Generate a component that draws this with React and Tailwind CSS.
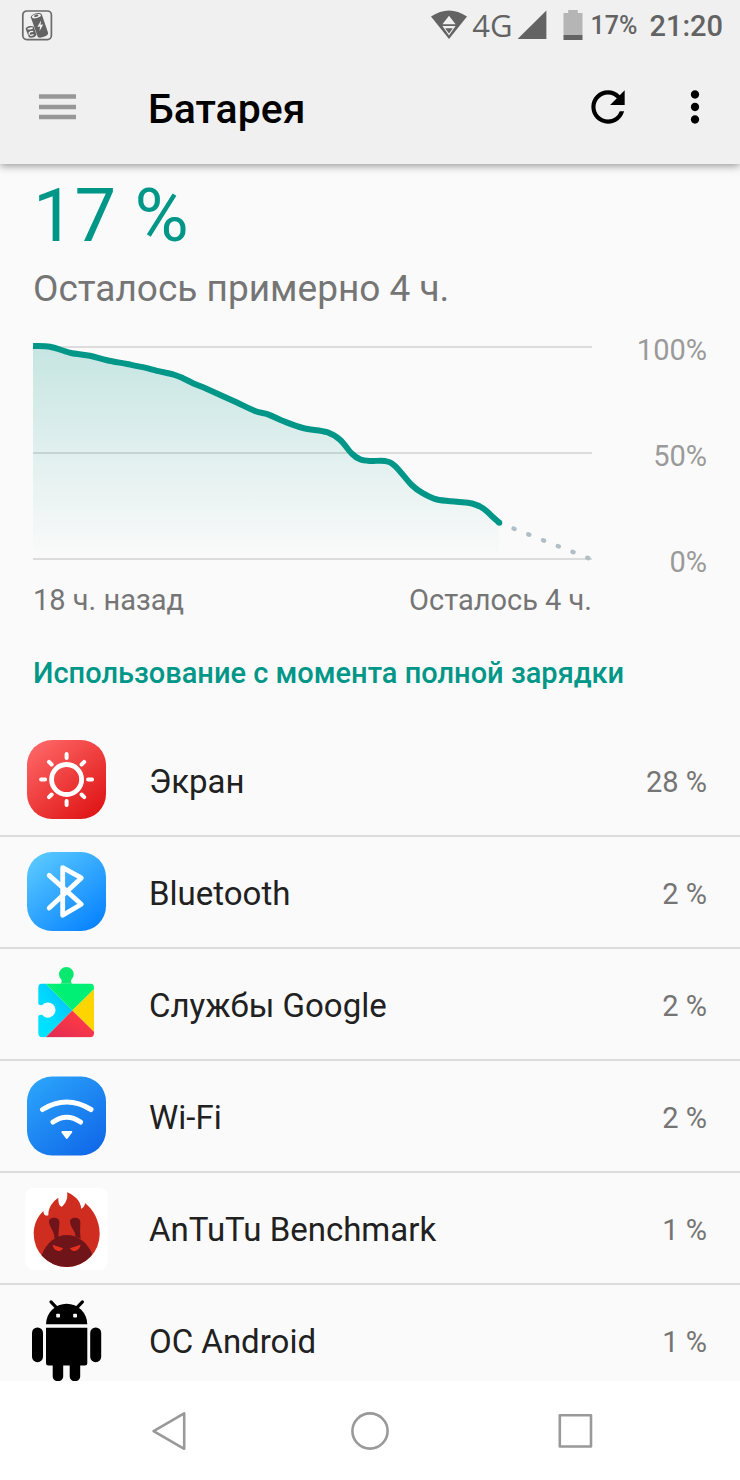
import React from "react";
import { MdMoreVert, MdRefresh } from "react-icons/md";

const LEVELS = [
  [0, 14], [17, 14.7], [37, 20.7], [57, 23.8], [74, 28.2], [94, 32], [112, 35.6],
  [124, 38.8], [140, 42.3], [150, 46.2], [160, 51.2], [174, 57], [200, 68.7],
  [222, 79], [235, 82.3], [250, 89], [270, 96], [294, 100.2], [307, 107.8],
  [318.7, 121.5], [327, 127.3], [337, 129], [352, 129], [362, 134], [378.7, 153],
  [390, 161.3], [404, 167.5], [424, 169.7], [439, 171.5], [450.3, 176.5],
  [458.7, 184], [466.3, 190.7],
];

// Catmull-Rom spline through the points, written as cubic segments.
function smoothPath(points) {
  let d = `M${points[0][0]} ${points[0][1]}`;
  for (let i = 0; i < points.length - 1; i++) {
    const a = points[Math.max(i - 1, 0)];
    const b = points[i];
    const c = points[i + 1];
    const e = points[Math.min(i + 2, points.length - 1)];
    d += `C${b[0] + (c[0] - a[0]) / 6} ${b[1] + (c[1] - a[1]) / 6} ${c[0] - (e[0] - b[0]) / 6} ${c[1] - (e[1] - b[1]) / 6} ${c[0]} ${c[1]}`;
  }
  return d;
}

function BatteryChart() {
  const line = smoothPath(LEVELS);
  return (
    <svg viewBox="0 0 559 244" className="block h-auto w-full" role="img" aria-label="График заряда батареи">
      <defs>
        <linearGradient id="level" x1="0" y1="14" x2="0" y2="226" gradientUnits="userSpaceOnUse">
          <stop offset="0" stopColor="#009688" stopOpacity="0.21" />
          <stop offset="1" stopColor="#009688" stopOpacity="0" />
        </linearGradient>
      </defs>
      <path d="M0 15H559M0 121H559M0 227H559" stroke="#dcdcdc" strokeWidth="2" />
      <path d={`${line}V226H0Z`} fill="url(#level)" />
      <path d="M480.5 196.5L555.5 226.2" stroke="#b0bec5" strokeWidth="4.4" strokeLinecap="round" strokeDasharray="1.2 14.66" />
      <path d={line} fill="none" stroke="#009688" strokeWidth="6" />
      <circle cx="466.3" cy="190.7" r="3" fill="#009688" />
    </svg>
  );
}

function Tile({ id, from, to, y, children }) {
  return (
    <svg viewBox="0 0 84 84" className="size-[84px]" aria-hidden="true">
      <defs>
        <linearGradient id={id} x1="0.1" y1="0" x2="0.9" y2="1">
          <stop offset="0" stopColor={from} />
          <stop offset="1" stopColor={to} />
        </linearGradient>
      </defs>
      <rect x="2" y={y} width="79" height="79" rx="25" fill={`url(#${id})`} />
      {children}
    </svg>
  );
}

function ScreenIcon() {
  return (
    <Tile id="screen" from="#ff6868" to="#de1212" y="2">
      <g fill="none" stroke="#fff">
        <circle cx="41.6" cy="41.5" r="15" strokeWidth="4.8" />
        <path
          strokeWidth="4"
          strokeLinecap="round"
          d="M41.6 20v-4M41.6 63v4M20.1 41.5h-4M63.1 41.5h4M26.6 26.5l-2.6-2.6M56.6 26.5l2.6-2.6M26.6 56.5l-2.6 2.6M56.6 56.5l2.6 2.6"
        />
      </g>
    </Tile>
  );
}

function BluetoothIcon() {
  return (
    <Tile id="bluetooth" from="#5ccbff" to="#0480ff" y="2">
      <path
        d="M24.2 25.4L56.3 54.2L37.7 65.3V17.7L56.3 27.9L24.2 58"
        fill="none"
        stroke="#fff"
        strokeWidth="4.8"
        strokeLinecap="round"
        strokeLinejoin="round"
      />
    </Tile>
  );
}

function WifiIcon() {
  return (
    <Tile id="wifi" from="#2ba5fb" to="#0f66e8" y="2.5">
      <path
        d="M17.5 35.5Q41.7 20.5 66 35.5M28 48Q41.7 38.5 55.5 48"
        fill="none"
        stroke="#fff"
        strokeWidth="5"
        strokeLinecap="round"
      />
      <path d="M37.3 58H46.3L41.8 64Z" fill="#fff" stroke="#fff" strokeWidth="2" strokeLinejoin="round" />
    </Tile>
  );
}

function GoogleServicesIcon() {
  return (
    <svg viewBox="0 0 84 84" className="size-[84px]" aria-hidden="true">
      <defs>
        <linearGradient id="gBlue" x1="1" y1="0" x2="0" y2="1">
          <stop offset="0" stopColor="#00b8ff" />
          <stop offset="0.6" stopColor="#00dcff" />
          <stop offset="1" stopColor="#00e5ff" />
        </linearGradient>
        <linearGradient id="gRed" x1="1" y1="0" x2="0" y2="1">
          <stop offset="0.3" stopColor="#ff3a44" />
          <stop offset="1" stopColor="#de2a55" />
        </linearGradient>
        <clipPath id="gBody">
          <path d="M17.3 21.5H65a4 4 0 0 1 4 4V71.2a4 4 0 0 1-4 4H17.3a4 4 0 0 1-4-4V54Q14.5 52.7 17 52.8A7.6 7.6 0 1 0 17 43.3Q14.5 43.4 13.3 42V25.5a4 4 0 0 1 4-4Z" />
        </clipPath>
      </defs>
      <g clipPath="url(#gBody)">
        <path d="M13 21.5H20.5L47.3 48.5L20.5 75.5H13Z" fill="url(#gBlue)" />
        <path d="M20.5 21.5H75L47.3 48.5Z" fill="#00f076" />
        <path d="M70 26.3V70.7L47.3 48.5Z" fill="#ffd500" />
        <path d="M20.5 75.5L47.3 48.5L75 75.5Z" fill="url(#gRed)" />
      </g>
      <path d="M35.5 21.7Q37.4 20.1 36.4 17.8A7.4 7.4 0 1 1 46.3 17.8Q45.3 20.1 47.2 21.7Z" fill="#0be870" />
    </svg>
  );
}

function AntutuIcon() {
  return (
    <svg viewBox="0 0 84 84" className="size-[84px]" aria-hidden="true">
      <rect x="0.5" y="2" width="82" height="82" rx="8" fill="#fff" />
      <path
        d="M41.7 81A33 33 0 0 1 8.7 48C8.7 38.5 12.5 30.5 18.4 25C18.6 27 19 28.7 20 29.2Q21.5 29.9 23.4 29.3C23 22.5 27 16 33.3 11.7C33.3 15.5 33.6 19.6 36.8 20.7C40.5 18 43.3 12 42 6.3C48.5 8.8 56 14.5 56.2 22.7C58.6 21.5 59.9 19.7 60 17C68.5 23.5 74.7 35 74.7 48A33 33 0 0 1 41.7 81Z"
        fill="#cf2d20"
      />
      <path
        d="M16.5 69.3C21 57 31 49 41.7 49C53 49 63 57 67.4 68.6A33 33 0 0 1 16.5 69.3Z"
        fill="#6f151a"
      />
      <path
        d="M24 36C23.6 30.6 34 30.4 34.4 36C34.6 41 33 46 33.6 52H29.4C29.6 45 24.6 42 24 36ZM45 36C44.8 30.6 55 30.4 55.3 36C55.4 41 54.6 46 55.7 52.5L50.4 51C51 45 45.4 42 45 36Z"
        fill="#6f151a"
      />
      <path
        d="M27.5 58.8L38 62.2Q36.6 65 33.2 65Q28.6 64 27.5 58.8ZM55.7 58.8L45 62.2Q46.4 65 49.8 65Q54.4 64 55.7 58.8Z"
        fill="#e5301f"
      />
    </svg>
  );
}

function AndroidIcon() {
  return (
    <svg viewBox="0 0 84 84" className="size-[84px]" aria-hidden="true">
      <path d="M21 26.3A20.6 20.6 0 0 1 62.3 26.3Z" />
      <path d="M26 3.9L31 9.1M57.4 3.9L52.4 9.1" stroke="#000" strokeWidth="3.2" strokeLinecap="round" />
      <rect x="31.2" y="15.7" width="3.8" height="3.8" rx="0.8" fill="#fafafa" />
      <rect x="48.2" y="15.7" width="3.8" height="3.8" rx="0.8" fill="#fafafa" />
      <path d="M21 29.8H62.3V65a2.5 2.5 0 0 1-2.5 2.5H55.2V78.4a4.8 4.8 0 0 1-4.8 4.8H49.5a4.8 4.8 0 0 1-4.8-4.8V67.5H38.2V78.4a4.8 4.8 0 0 1-4.8 4.8H32.5a4.8 4.8 0 0 1-4.8-4.8V67.5H23.5a2.5 2.5 0 0 1-2.5-2.5Z" />
      <rect x="7" y="29.5" width="11" height="34.7" rx="5.4" />
      <rect x="65.2" y="29.5" width="11" height="34.7" rx="5.4" />
    </svg>
  );
}

const APPS = [
  { name: "Экран", value: "28 %", Icon: ScreenIcon },
  { name: "Bluetooth", value: "2 %", Icon: BluetoothIcon },
  { name: "Службы Google", value: "2 %", Icon: GoogleServicesIcon },
  { name: "Wi-Fi", value: "2 %", Icon: WifiIcon },
  { name: "AnTuTu Benchmark", value: "1 %", Icon: AntutuIcon },
  { name: "ОС Android", value: "1 %", Icon: AndroidIcon },
];

function StatusBar() {
  return (
    <div className="flex h-[50px] items-center pr-[17px] pl-[21px] font-medium text-[#636363]">
      <svg viewBox="0 0 32 32" className="size-8" fill="#636363" aria-hidden="true">
        <rect x="1.8" y="2" width="28.6" height="28.6" rx="4" fill="none" stroke="#6b6b6b" strokeWidth="1.7" />
        <path d="M9.8 8.2Q10.4 5.6 14.4 4.4Q19.4 3.2 20.8 5.4L27 23.4Q27.6 25.8 23.6 27.6Q18.6 29.6 16.8 28Z" />
        <ellipse cx="15.4" cy="7.2" rx="4.6" ry="1.9" fill="#f0f0f0" transform="rotate(-14 15.4 7.2)" />
        <ellipse cx="15.2" cy="6.7" rx="2.2" ry="1.1" transform="rotate(-14 15.2 6.7)" />
        <path d="M20 11.6L16.4 18L19 17.6L18.6 22L22.2 15.4L19.6 15.8Z" fill="#f0f0f0" />
        <path d="M4.6 19.8Q5.4 17.4 9.2 17Q12.4 16.8 13 18.2L15.4 25.4Q15 27.8 11.2 28.6Q8.4 29 7.8 28Z" />
        <ellipse cx="9.2" cy="19.4" rx="3" ry="1" fill="#f0f0f0" transform="rotate(-10 9.2 19.4)" />
        <path d="M8.2 26V23.6Q9 22.4 12.2 22.4M9 26.6L12.6 25.6" stroke="#f0f0f0" strokeWidth="1.2" fill="none" />
      </svg>
      <svg viewBox="0 0 38 30" className="ml-auto h-[30px] w-[38px]" aria-hidden="true">
        <path d="M1 6.6Q19-5.4 37 6.6L19 29Z" fill="#636363" />
        <path d="M19 5.8L25.6 14.2H12.4ZM12.4 16H25.6L19 25.6Z" fill="#f0f0f0" />
        <path d="M15.2 18.2H22.8L19 23.4Z" fill="#636363" />
      </svg>
      <span className="ml-1 font-['Open_Sans',sans-serif] text-[31px] leading-8 font-normal">4G</span>
      <svg viewBox="0 0 30 30" className="ml-1 size-[30px]" aria-hidden="true">
        <path d="M29.4 0.4V29H0.6Z" fill="#636363" />
      </svg>
      <svg viewBox="0 0 20 30" className="ml-4 h-[30px] w-5" aria-hidden="true">
        <path d="M0.5 3H5.2V0H14.8V3H19.5V25H0.5Z" fill="#b5b5b5" />
        <path d="M0.5 25H19.5V30H0.5Z" fill="#636363" />
      </svg>
      <span className="ml-2 pt-0.5 text-[25px] leading-8">17%</span>
      <span className="ml-3 pt-0.5 text-[29px] leading-8">21:20</span>
    </div>
  );
}

export default function App() {
  return (
    <div className="flex h-screen flex-col bg-[#fafafa] font-[Roboto,sans-serif]">
      <header className="relative z-10 bg-[#f0f0f0] shadow-[0_2px_8px_rgba(0,0,0,0.4)]">
        <StatusBar />
        <div className="flex h-[114px] items-center pr-5 pl-[37px]">
          <button type="button" aria-label="Меню" className="shrink-0">
            <svg viewBox="0 0 40 32" className="h-8 w-10" aria-hidden="true">
              <path d="M2 5.5H39M2 16H39M2 26H39" stroke="#979797" strokeWidth="4.4" />
            </svg>
          </button>
          <h1 className="ml-[71px] flex-1 pt-1 text-[41px] leading-[48px] font-medium text-black">Батарея</h1>
          <button type="button" aria-label="Обновить" className="mr-[37px]">
            <MdRefresh className="size-[50px]" />
          </button>
          <button type="button" aria-label="Ещё">
            <MdMoreVert className="size-[50px]" />
          </button>
        </div>
      </header>

      <main className="min-h-0 flex-1 overflow-y-auto [scrollbar-width:none]">
        <section className="px-[33px] pt-3">
          <p className="text-[74px] leading-[80px] text-[#009688]">17 %</p>
          <p className="mt-2 text-[37px] leading-[50px] text-[#757575]">Осталось примерно 4 ч.</p>
          <div className="mt-[18px] flex text-[29px] leading-8">
            <div className="flex-1">
              <BatteryChart />
              <div className="mt-2 flex justify-between text-[#757575]">
                <span>18 ч. назад</span>
                <span>Осталось 4 ч.</span>
              </div>
            </div>
            <div className="flex h-[246px] w-[115px] flex-col justify-between pt-0.5 text-right text-[#9a9a9a]">
              <span>100%</span>
              <span>50%</span>
              <span>0%</span>
            </div>
          </div>
          <h2 className="mt-10 text-[29px] leading-[34px] font-medium text-[#009688]">
            Использование с момента полной зарядки
          </h2>
        </section>

        <ul className="mt-[35px]">
          {APPS.map(({ name, value, Icon }) => (
            <li key={name} className="flex h-28 items-center border-b-2 border-[#dcdcdc] pr-[33px] pl-[25px]">
              <Icon />
              <span className="ml-10 flex-1 pt-1 text-[33px] leading-10 text-[#212121]">{name}</span>
              <span className="pt-1 text-[29px] leading-10 text-[#757575]">{value}</span>
            </li>
          ))}
        </ul>
      </main>

      <nav className="flex h-[99px] shrink-0 items-center justify-center bg-white">
        <button type="button" aria-label="Назад" className="flex w-[205px] justify-center">
          <svg viewBox="0 0 44 44" className="size-11" fill="none" stroke="#999" strokeWidth="2.6" strokeLinejoin="round" aria-hidden="true">
            <path d="M41.2 4.4V39.8L10.6 22.1Z" />
          </svg>
        </button>
        <button type="button" aria-label="Домой" className="flex w-[205px] justify-center">
          <svg viewBox="0 0 44 44" className="size-11" fill="none" stroke="#999" strokeWidth="2.6" aria-hidden="true">
            <circle cx="22" cy="22" r="17.6" />
          </svg>
        </button>
        <button type="button" aria-label="Недавние" className="flex w-[205px] justify-center">
          <svg viewBox="0 0 44 44" className="size-11" fill="none" stroke="#999" strokeWidth="2.6" strokeLinejoin="round" aria-hidden="true">
            <path d="M6.8 6.3H38V37.5H6.8Z" />
          </svg>
        </button>
      </nav>
    </div>
  );
}
